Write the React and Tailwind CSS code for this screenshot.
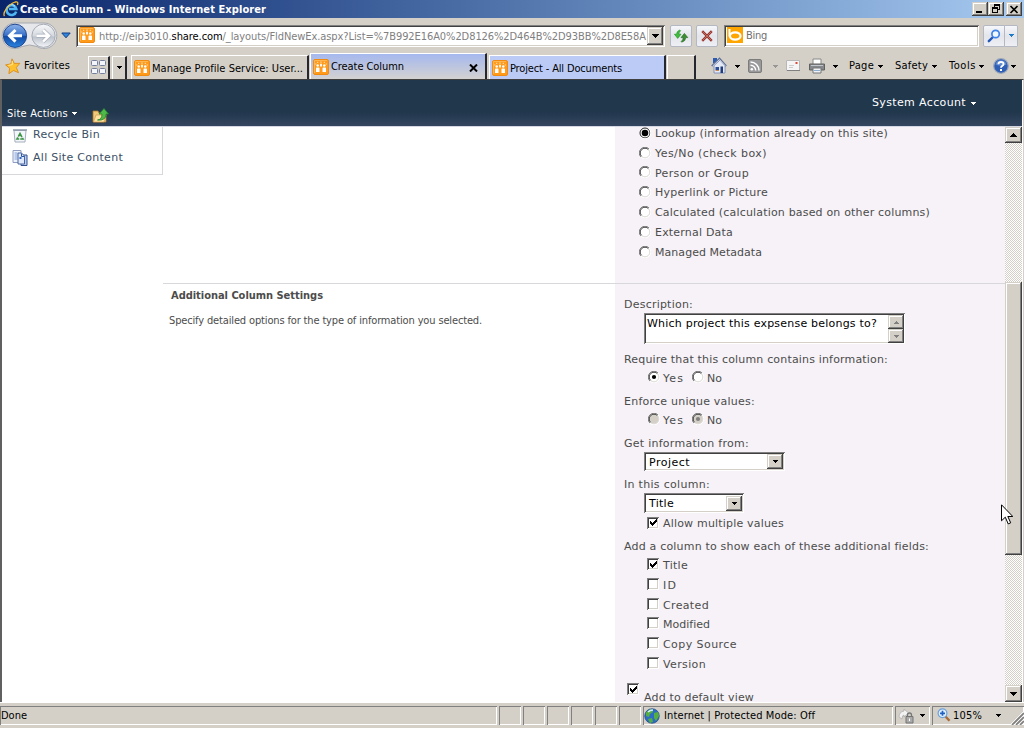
import React, { useLayoutEffect, useRef } from "react";

/* Text run spread over a fixed advance width. */
function T({ w, className = "", children }) {
  const ref = useRef(null);
  useLayoutEffect(() => {
    const el = ref.current;
    el.style.letterSpacing = "0px";
    const natural = el.getBoundingClientRect().width;
    el.style.letterSpacing = (w - natural) / el.textContent.length + "px";
  }, [w]);
  return (
    <span ref={ref} className={"inline-block shrink-0 whitespace-pre " + className}>
      {children}
    </span>
  );
}

const ui = "font-['DejaVu_Sans_Condensed','DejaVu_Sans',sans-serif] [font-stretch:condensed] text-[11px]";
const raised =
  "bg-[#d4d0c8] shadow-[inset_-1px_-1px_#404040,inset_1px_1px_#d4d0c8,inset_-2px_-2px_#808080,inset_2px_2px_#ffffff]";
const sunken =
  "bg-white shadow-[inset_1px_1px_#808080,inset_-1px_-1px_#ffffff,inset_2px_2px_#404040,inset_-2px_-2px_#d4d0c8]";

function Arrow({ up, className = "", fill = "#000" }) {
  return (
    <svg className={"shrink-0 " + className} width="5" height="3" viewBox="0 0 5 3" shapeRendering="crispEdges">
      <path d={up ? "M2 0h1v1h1v1h1v1H0V2h1V1h1z" : "M0 0h5v1H4v1H3v1H2V2H1V1H0z"} fill={fill} />
    </svg>
  );
}

function BigArrow({ up }) {
  return (
    <svg width="7" height="4" viewBox="0 0 7 4" shapeRendering="crispEdges">
      <path d={up ? "M3 0h1v1h1v1h1v1h1v1H0V3h1V2h1V1h1z" : "M0 0h7v1H6v1H5v1H4v1H3V3H2V2H1V1H0z"} fill="#000" />
    </svg>
  );
}

function PeopleIcon({ className = "" }) {
  return (
    <svg className={"shrink-0 " + className} width="16" height="16" viewBox="0 0 16 16">
      <rect x=".5" y=".5" width="15" height="15" rx="1.5" fill="#ff9a1a" stroke="#f08a10" />
      <path d="M1.500 14V1.500H14" fill="none" stroke="#ffb550" />
      <g fill="#fff">
        <circle cx="4.700" cy="6.600" r="1.250" />
        <circle cx="11.300" cy="6.600" r="1.250" />
        <path d="M3 13V9.300q0-.8.800-.8h1.900q.8 0 .8.800V13zM9.500 13V9.300q0-.8.800-.8h1.900q.8 0 .8.800V13z" />
        <path d="M7.500 2.500h1v1.200h-1zM7 4.800h2v2.700H7z" opacity=".9" />
        <path d="M4.200 2.700h1v1.400h-1zM2.300 4.500h1v1h-1zM10.800 2.700h1v1.400h-1zM12.800 4.500h1v1h-1z" opacity=".75" />
      </g>
    </svg>
  );
}

function IELogo() {
  return (
    <svg className="ml-[3px] shrink-0" width="16" height="16" viewBox="0 0 16 16">
      <path d="M13.200 10.600A4.900 4.900 0 1 1 13.300 8H6" fill="none" stroke="#4fb4f2" strokeWidth="2.600" />
      <path d="M4.200 6.800A4.500 4.500 0 0 1 12 5.200" fill="none" stroke="#b7e6ff" strokeWidth="1" />
      <path d="M1.500 15C-.8 12 5.500 3 12.200 1c2.800-.6 3 1 2.200 3" fill="none" stroke="#f5b932" strokeWidth="1.300" />
    </svg>
  );
}

function NavButtons() {
  return (
    <svg className="shrink-0" width="58" height="30" viewBox="0 0 58 30">
      <defs>
        <linearGradient id="nb" x1="0" y1="0" x2="0" y2="1">
          <stop offset="0" stopColor="#8eb4ea" />
          <stop offset=".48" stopColor="#376fc8" />
          <stop offset=".52" stopColor="#1148a4" />
          <stop offset="1" stopColor="#2c86e0" />
        </linearGradient>
        <linearGradient id="nf" x1="0" y1="0" x2="0" y2="1">
          <stop offset="0" stopColor="#f8f9fb" />
          <stop offset=".5" stopColor="#d4d8df" />
          <stop offset=".55" stopColor="#bcc2cc" />
          <stop offset="1" stopColor="#f4f6f9" />
        </linearGradient>
      </defs>
      <path d="M15 2h29a12.800 12.800 0 1 1-7 23.500q-7.500-3-15 0A12.800 12.800 0 1 1 15 2z" fill="#e5e7eb" stroke="#a5a9b0" strokeWidth="1" />
      <circle cx="15" cy="14.800" r="11.600" fill="url(#nb)" stroke="#24488c" />
      <circle cx="43.500" cy="14.800" r="11.600" fill="url(#nf)" stroke="#a6abb4" />
      <path d="M15.500 9 9.500 14.800l6 5.800M10 14.800h12" fill="none" stroke="#fff" strokeWidth="3" />
      <path d="m43 9 6 5.800-6 5.800M48.500 14.800h-12" fill="none" stroke="#a8afba" strokeWidth="4" />
      <path d="m43 9 6 5.800-6 5.800M48.500 14.800h-12" fill="none" stroke="#fff" strokeWidth="2.600" />
    </svg>
  );
}

function TitleBar() {
  const btn = "flex h-[14px] w-4 shrink-0 items-center justify-center " + raised;
  return (
    <div className="flex h-[18px] items-center bg-linear-to-r from-[#0a246a] to-[#a6caf0]">
      <IELogo />
      <T w={246} className={ui + " ml-px pt-[2px] font-bold text-white leading-4"}>Create Column - Windows Internet Explorer</T>
      <div className="ml-auto mr-[2px] flex">
        <div className={btn}>
          <svg width="12" height="10" viewBox="0 0 12 10" shapeRendering="crispEdges"><path d="M2 7h6v2H2z" /></svg>
        </div>
        <div className={btn}>
          <svg width="12" height="10" viewBox="0 0 12 10" shapeRendering="crispEdges">
            <path d="M4 0h6v6H8V5h1V2H5v1H4zM2 3h6v6H2zm1 2v3h4V5z" fillRule="evenodd" />
          </svg>
        </div>
        <div className={btn + " ml-[2px]"}>
          <svg width="10" height="9" viewBox="0 0 10 9"><path d="m1.500 1 7 7m0-7-7 7" stroke="#000" strokeWidth="1.700" /></svg>
        </div>
      </div>
    </div>
  );
}

function AddressRow() {
  const glass =
    "flex h-[22px] shrink-0 items-center justify-center rounded-[2px] border border-[#b4b8c2] bg-linear-to-b from-[#f6f7fa] via-[#e3e5eb] to-[#eef0f5]";
  return (
    <div className="flex h-[35px] items-center bg-[#d4d0c8]">
      <NavButtons />
      <svg className="ml-[3px] shrink-0" width="10" height="7" viewBox="0 0 10 7">
        <path d="M.8 1h8.400L5 5.800z" fill="#2f86dc" stroke="#123f86" />
      </svg>
      <div className={"ml-[5px] flex h-[22px] w-[589px] shrink-0 items-center pr-[2px] pl-[3px] " + sunken}>
        <PeopleIcon className="-mt-px" />
        <T w={547} className={ui + " ml-[4px] pt-[2px] leading-4 text-[#808080]"}>
          http://eip3010.<span className="text-black">share.com</span>/_layouts/FldNewEx.aspx?List=%7B992E16A0%2D8126%2D464B%2D93BB%2D8E58A
        </T>
        <div className={"ml-auto flex h-[18px] w-4 shrink-0 items-center justify-center " + raised}><BigArrow /></div>
      </div>
      <div className={glass + " ml-[5px] w-[22px]"}>
        <svg width="16" height="16" viewBox="0 0 16 16">
          <path d="M6.800 2Q3.600 3.200 3.600 6.200H1.400L4.700 10.400 8 6.200H5.900Q5.900 4 7.600 2.700z" fill="#3fc03a" stroke="#1d8a26" strokeWidth=".6" />
          <path d="M8.700 14.200Q12.600 13.200 12.700 9.600h2.100L11.400 5.400 8 9.600h2.200Q10.200 12.200 8.200 13.400z" fill="#3d8f2f" stroke="#1d6420" strokeWidth=".6" />
        </svg>
      </div>
      <div className={glass + " ml-1 w-[22px]"}>
        <svg width="12" height="12" viewBox="0 0 12 12">
          <path d="m1.200 1.200 9.600 9.600m0-9.600-9.600 9.600" stroke="#93342f" strokeWidth="2.400" />
          <path d="m1.500 1.500 9 9m0-9-9 9" stroke="#c9685c" strokeWidth="1" />
        </svg>
      </div>
      <div className={"ml-[6px] flex h-[22px] w-[255px] shrink-0 items-center pl-[3px] " + sunken}>
        <svg className="-mt-px shrink-0" width="16" height="16" viewBox="0 0 16 16">
          <path d="M0 0h16v16H0z" fill="#ffa500" />
          <path d="M2.500 2v7.500" stroke="#fff" strokeWidth="2" />
          <ellipse cx="8.200" cy="9" rx="5.300" ry="3.600" fill="none" stroke="#fff" strokeWidth="2.200" />
        </svg>
        <T w={21} className={ui + " ml-[3px] pt-[2px] text-[#707070]"}>Bing</T>
      </div>
      <div className={glass + " ml-1 w-[22px] rounded-r-none"}>
        <svg width="14" height="14" viewBox="0 0 14 14">
          <path d="m6 8-4.200 4.200" stroke="#2458b8" strokeWidth="2.400" strokeLinecap="round" />
          <circle cx="8.600" cy="5" r="3.700" fill="#f2f8ff" stroke="#3f82e8" strokeWidth="1.700" />
        </svg>
      </div>
      <div className={glass + " w-[13px] rounded-l-none border-l-0"}><Arrow fill="#1f7bc8" /></div>
    </div>
  );
}

function Star() {
  return (
    <svg className="ml-[5px] shrink-0" width="16" height="16" viewBox="0 0 16 16">
      <path d="M7 .8 9.300 5.400l5.500-.1-3.500 4.200 2.200 5.200-5-2.200-4.600 3.200.7-5.500L.600 6.900l5.300-1z" fill="#ffc02e" stroke="#d98a18" strokeWidth=".9" />
      <path d="m7.200 3 .2 3.600-4 .8" fill="none" stroke="#ffe898" />
    </svg>
  );
}

function HomeIcon() {
  return (
    <svg className="shrink-0" width="16" height="17" viewBox="0 0 16 17">
      <path d="M2 1h4v5H2z" fill="#2c5cae" />
      <path d="M3 8.500 9 3l5 5.500V16H3z" fill="#e3e9f4" stroke="#7a8bb4" strokeWidth=".9" />
      <path d="M.8 9.200 8.500 1.500l6.700 7.700" fill="none" stroke="#5f6f94" strokeWidth="1.800" />
      <path d="M1.500 9.200 8.500 2.500l6 6.700" fill="none" stroke="#dfe8f6" strokeWidth=".8" />
      <path d="M4.500 10h3.500v3H4.500z" fill="#2f4f94" />
      <path d="M9.500 9.500H12V16H9.500z" fill="#1f3b7c" />
      <path d="M4.500 13.500H8" stroke="#c98a50" />
    </svg>
  );
}

function CommandBar() {
  return (
    <>
      <div className="-mt-px ml-[15px] flex w-4 shrink-0"><HomeIcon /></div>
      <Arrow className="ml-2" />
      <svg className="ml-[8px] shrink-0" width="14" height="14" viewBox="0 0 14 14">
        <rect x=".5" y=".5" width="13" height="13" rx="1.500" fill="#9a9a9a" stroke="#7c7c7c" />
        <circle cx="3.800" cy="10.200" r="1.300" fill="#fff" />
        <path d="M2.500 6.300a5.200 5.200 0 0 1 5.200 5.200M2.500 3a8.500 8.500 0 0 1 8.500 8.500" fill="none" stroke="#fff" strokeWidth="1.500" />
      </svg>
      <Arrow className="ml-[11px]" fill="#969696" />
      <svg className="-mt-[2px] ml-2 shrink-0" width="14" height="11" viewBox="0 0 14 11">
        <path d="M.5.500h13v10H.5z" fill="#f5f5f5" stroke="#b8b8b8" />
        <path d="M1 10.500h13" stroke="#808080" />
        <path d="M9.500 2h2v2h-2z" fill="#d94a38" />
        <path d="M3 5.500h5M3 7.500h4" stroke="#ccc" />
      </svg>
      <svg className="ml-[9px] shrink-0" width="16" height="16" viewBox="0 0 16 16">
        <path d="M4 1h8v6H4z" fill="#fff" stroke="#888" />
        <path d="M.500 6h15v6H.500z" fill="#85888c" stroke="#606060" />
        <path d="M2 7.500h12" stroke="#c3c6ca" />
        <path d="M4 10h8v5H4z" fill="#eef2f6" stroke="#777" />
        <path d="M5 12.500h6" stroke="#8fb0d0" />
      </svg>
      <Arrow className="ml-2" />
      <T w={25} className="ml-[11px]">Page</T>
      <Arrow className="ml-[4px]" />
      <T w={33} className="ml-[12px]">Safety</T>
      <Arrow className="ml-[4px]" />
      <T w={27} className="ml-[12px]">Tools</T>
      <Arrow className="ml-[3px]" />
      <svg className="-mt-px ml-[9px] shrink-0" width="16" height="16" viewBox="0 0 16 16">
        <circle cx="8" cy="8" r="7.300" fill="#2e5fb5" stroke="#9ba6ba" strokeWidth="1.200" />
        <path d="M2.500 6.500a5.700 5.700 0 0 1 11 0Q8 9 2.500 6.500z" fill="#7da5e4" opacity=".6" />
        <path d="M5.400 6.300Q5.500 4 8 4t2.600 2.100Q10.600 7.300 9 8.100q-1 .5-1 1.700" fill="none" stroke="#fff" strokeWidth="1.800" />
        <path d="M7 11h2v2H7z" fill="#fff" />
      </svg>
      <Arrow className="ml-[2px]" />
    </>
  );
}

function TabsRow() {
  const edge = "shrink-0 border-t border-l border-t-white border-l-white border-r-2 border-r-[#26262e]";
  return (
    <div className={"flex h-[26px] items-center bg-[#d4d0c8] text-black " + ui}>
      <Star />
      <T w={46} className="ml-[3px]">Favorites</T>
      <div className={"ml-[18px] flex h-[23px] w-[22px] items-center justify-center self-end pb-[2px] " + edge}>
        <svg width="16" height="16" viewBox="0 0 16 16">
          <g fill="#f3f5fa" stroke="#747f9c">
            <rect x=".5" y="1.500" width="6" height="5" rx="1" /><rect x="8.500" y="1.500" width="6" height="5" rx="1" />
            <rect x=".5" y="9.500" width="6" height="5" rx="1" /><rect x="8.500" y="9.500" width="6" height="5" rx="1" />
          </g>
        </svg>
      </div>
      <div className={"ml-[2px] flex h-[23px] w-[15px] items-center justify-center self-end " + edge}><Arrow className="-mt-[2px]" /></div>
      <div className={"ml-[4px] flex h-[24px] w-[178px] items-center self-end pl-[2px] " + edge}>
        <PeopleIcon />
        <T w={151} className="ml-[2px] pt-[3px]">Manage Profile Service: User...</T>
      </div>
      <div className={"ml-[1px] flex h-[26px] w-[177px] items-center self-end bg-linear-to-b from-[#a5b8ee] to-[#d4d2d0] pl-[2px] " + edge}>
        <PeopleIcon />
        <T w={73} className="ml-[2px] pt-[2px]">Create Column</T>
        <svg className="mt-[2px] mr-[7px] ml-auto shrink-0" width="9" height="8" viewBox="0 0 9 8">
          <path d="m1 .500 7 7m0-7-7 7" stroke="#000" strokeWidth="2" />
        </svg>
      </div>
      <div className={"ml-[2px] flex h-[24px] w-[177px] items-center self-end bg-[#bccbf6] pl-[2px] " + edge}>
        <PeopleIcon />
        <T w={112} className="ml-[2px] pt-[3px]">Project - All Documents</T>
      </div>
      <div className={"ml-[1px] h-[24px] w-[29px] self-end " + edge} />
      <CommandBar />
    </div>
  );
}

function SiteHeader() {
  return (
    <div className="flex h-[46px] items-end bg-linear-to-b from-[#21374c] from-70% to-[#34465f] text-white">
      <div className="flex h-[26px] items-center pl-[5px]">
        <T w={61} className={ui + " pt-[2px]"}>Site Actions</T>
        <Arrow className="mt-px ml-[4px]" fill="#fff" />
        <svg className="mt-[4px] ml-[15px]" width="17" height="16" viewBox="0 0 17 16">
          <path d="M1 4h5l1 2h7v9H1z" fill="#f0c878" stroke="#ad7829" strokeWidth=".8" />
          <path d="M1.500 15 4 8h10l-2 7z" fill="#ffe1a0" stroke="#c8944c" strokeWidth=".6" />
          <path d="M5.500 13q4.500-.5 4.500-6H7l5-5.500L16.500 7H14q0 7-8.500 6z" fill="#4fb948" stroke="#238331" strokeWidth=".8" />
        </svg>
      </div>
      <div className="mr-[46px] mb-[15px] ml-auto flex items-center">
        <T w={94} className="font-['DejaVu_Sans',sans-serif] text-[11px] leading-4">System Account</T>
        <Arrow className="ml-[5px]" fill="#fff" />
      </div>
    </div>
  );
}

function Radio({ checked, disabled, className = "" }) {
  return (
    <svg className={"shrink-0 " + className} width="12" height="12" viewBox="0 0 12 12">
      <circle cx="6" cy="6" r="5" fill={disabled ? "#d4d0c8" : "#fff"} />
      <path d="M1.900 10.100A5.700 5.700 0 0 1 10.100 1.900" fill="none" stroke="#808080" />
      <path d="M10.100 1.900A5.700 5.700 0 0 1 1.900 10.100" fill="none" stroke="#fff" />
      <path d="M2.600 9.400A4.700 4.700 0 0 1 9.400 2.600" fill="none" stroke="#404040" />
      <path d="M9.400 2.600A4.700 4.700 0 0 1 2.600 9.400" fill="none" stroke="#dedbd6" />
      {checked && <circle cx="6" cy="6" r="2.100" fill={disabled ? "#808080" : "#000"} />}
    </svg>
  );
}

function FocusedRadio() {
  return (
    <svg className="-mt-px shrink-0" width="12" height="12" viewBox="0 0 12 12">
      <circle cx="6" cy="6" r="5" fill="#fff" stroke="#222" />
      <path d="M10.100 1.900A5.700 5.700 0 0 1 1.900 10.100" fill="none" stroke="#fff" />
      <circle cx="6" cy="6" r="3.300" fill="#000" />
    </svg>
  );
}

function Check({ checked, className = "" }) {
  return (
    <span className={"flex h-3 w-3 shrink-0 items-center justify-center " + sunken + " " + className}>
      {checked && (
        <svg width="7" height="7" viewBox="0 0 7 7" shapeRendering="crispEdges">
          <path d="M0 2h1v1h1v1h1V3h1V2h1V1h1V0h1v3H6v1H5v1H4v1H3v1H2V6H1V5H0z" fill="#000" />
        </svg>
      )}
    </span>
  );
}

function SelectBox({ className = "", children }) {
  return (
    <div className={"ml-[29px] flex items-center pr-[2px] pl-[5px] text-black " + sunken + " " + className}>
      {children}
      <span className={"ml-auto flex h-[15px] w-4 items-center justify-center " + raised}><Arrow /></span>
    </div>
  );
}

const columnTypes = [
  ["Lookup (information already on this site)", 233],
  ["Yes/No (check box)", 112],
  ["Person or Group", 94],
  ["Hyperlink or Picture", 113],
  ["Calculated (calculation based on other columns)", 275],
  ["External Data", 78],
  ["Managed Metadata", 107],
];

const extraFields = [
  ["Title", 25, "h-5"],
  ["ID", 14, "h-5"],
  ["Created", 46, "h-[19px]"],
  ["Modified", 47, "h-5"],
  ["Copy Source", 74, "h-5"],
  ["Version", 43, "h-5"],
];

function YesNo({ disabled }) {
  return (
    <div className="flex h-5 items-center pl-[33px]">
      <Radio checked={!disabled} disabled={disabled} className="-mt-[2px]" />
      <T w={21} className="ml-[3px] pt-[2px]">Yes</T>
      <Radio checked={disabled} disabled={disabled} className="-mt-[2px] ml-[8px]" />
      <T w={15} className="ml-[3px] pt-[2px]">No</T>
    </div>
  );
}

function SettingsForm() {
  const label = "flex h-[18px] items-center pt-[2px] pl-[9px]";
  return (
    <div className="flex flex-col pt-[11px] leading-4">
      <div className={label}><T w={69}>Description:</T></div>
      <div className={"ml-[29px] flex h-[31px] w-[261px] justify-between pr-px pl-[3px] text-black " + sunken}>
        <T w={230} className="mt-[3px]">Which project this expsense belongs to?</T>
        <div className="mt-[2px] flex flex-col">
          <span className={"flex h-[14px] w-4 items-center justify-center " + raised}><Arrow up fill="#808080" /></span>
          <span className={"flex h-[14px] w-4 items-center justify-center " + raised}><Arrow fill="#808080" /></span>
        </div>
      </div>
      <div className={label + " mt-[6px]"}><T w={264}>Require that this column contains information:</T></div>
      <YesNo />
      <div className={label + " mt-1"}><T w={131}>Enforce unique values:</T></div>
      <YesNo disabled />
      <div className={label + " mt-1"}><T w={125}>Get information from:</T></div>
      <SelectBox className="h-[19px] w-[141px]"><T w={41} className="pt-[2px]">Project</T></SelectBox>
      <div className={label + " mt-1"}><T w={86}>In this column:</T></div>
      <SelectBox className="h-5 w-[100px]"><T w={25} className="pt-[2px]">Title</T></SelectBox>
      <div className="flex h-5 items-center pl-[32px]">
        <Check checked className="-mt-px" />
        <T w={121} className="ml-1 pt-[2px]">Allow multiple values</T>
      </div>
      <div className={label + " mt-1"}><T w={305}>Add a column to show each of these additional fields:</T></div>
      {extraFields.map(([name, w, h], i) => (
        <div key={name} className={"flex items-center pl-[32px] " + h}>
          <Check checked={i === 0} className="-mt-[2px]" />
          <T w={w} className="ml-1 pt-[2px]">{name}</T>
        </div>
      ))}
      <div className="mt-[9px] flex pl-[12px]">
        <Check checked />
        <T w={110} className="mt-[7px] ml-[5px]">Add to default view</T>
      </div>
    </div>
  );
}

function SideNav() {
  return (
    <div className="flex h-[48px] w-[161px] shrink-0 flex-col border-r border-b border-[#d8d8dc] pl-[10px] text-[#3b4f65]">
      <div className="-mt-[3px] flex h-[22px] items-center">
        <svg width="16" height="16" viewBox="0 0 16 16">
          <path d="M2 3.500h12L13 15H3z" fill="#f3f6fa" stroke="#a4aebc" />
          <path d="M1 3h14" stroke="#8c98a8" strokeWidth="1.500" />
          <path d="m8 6.500 3 5.500H5z" fill="none" stroke="#3d9444" strokeWidth="1.600" strokeDasharray="4 1" />
        </svg>
        <T w={67} className="ml-[5px] pt-px">Recycle Bin</T>
      </div>
      <div className="flex h-[24px] items-center">
        <svg width="16" height="16" viewBox="0 0 16 16">
          <path d="M1 .500h8v12H1z" fill="#eef3fb" stroke="#8f9fc0" />
          <path d="M2.500 3h3M2.500 5h3M2.500 7h3M2.500 9h3" stroke="#7fa3da" />
          <path d="M9 5h6v10.500H9z" fill="#b9cdef" stroke="#35508c" />
          <path d="M6 3h3.500l3 3v8H6z" fill="#dfe9fa" stroke="#4a64a0" />
          <path d="M9.500 3.500v3H12" fill="none" stroke="#2757a8" />
          <path d="M7.500 7h2v2h-2z" fill="#2f66c0" />
        </svg>
        <T w={90} className="ml-[5px] pt-px">All Site Content</T>
      </div>
    </div>
  );
}

function ScrollBar() {
  return (
    <div className="flex w-[17px] shrink-0 flex-col bg-[repeating-conic-gradient(#ffffff_0_25%,#d4d0c8_0_50%)] bg-[length:2px_2px]">
      <div className={"flex h-[16px] items-center justify-center " + raised}><BigArrow up /></div>
      <div className={"mt-[139px] h-[273px] " + raised} />
      <div className={"mt-auto flex h-[17px] items-center justify-center " + raised}><BigArrow /></div>
    </div>
  );
}

function Page() {
  return (
    <div className="flex h-[576px] overflow-hidden border-t border-[#d5d8e2] bg-white font-['DejaVu_Sans',sans-serif] text-[11px] text-[#4c4c4c]">
      <SideNav />
      <div className="flex min-w-0 grow flex-col">
        <div className="flex h-[157px] shrink-0 border-b border-[#d8d8dc]">
          <div className="w-[452px]" />
          <div className="-mt-[3.600px] grow bg-[#f6f2f7] pl-[24px]">
            {columnTypes.map(([name, w], i) => (
              <div key={name} className="flex h-[19.800px] items-center">
                {i === 0 ? <FocusedRadio /> : <Radio className="-mt-px" />}
                <T w={w} className="ml-[4px] pt-[2px]">{name}</T>
              </div>
            ))}
          </div>
        </div>
        <div className="flex grow">
          <div className={"w-[452px] pt-[3px] " + ui}>
            <div className="pl-[8px] leading-[18px]"><T w={152} className="font-bold">Additional Column Settings</T></div>
            <div className="mt-[7px] pl-[6px] leading-[18px]"><T w={313}>Specify detailed options for the type of information you selected.</T></div>
          </div>
          <div className="grow bg-[#f6f2f7]"><SettingsForm /></div>
        </div>
      </div>
      <ScrollBar />
    </div>
  );
}

function StatusBar() {
  const pane = "flex h-[19px] shrink-0 items-center shadow-[inset_1px_1px_#808080,inset_-1px_-1px_#ffffff]";
  return (
    <div className={"flex h-[26px] border-t-[1px] border-b-[3px] border-t-white border-b-[#d4d0c8] bg-[#d4d0c8] pt-[3px] text-black " + ui}>
      <div className={pane + " w-[497px] pl-px"}><T w={26} className="pt-[2px]">Done</T></div>
      {[0, 1, 2, 3, 4, 5].map((i) => <div key={i} className={pane + " w-[22px] ml-[2px]"} />)}
      <div className={pane + " ml-[2px] w-[250px] pl-px"}>
        <svg width="16" height="16" viewBox="0 0 16 16">
          <circle cx="8" cy="8" r="7.300" fill="#2d6cc4" stroke="#244b80" strokeWidth=".7" />
          <path d="M2 4.500Q5 1 8 1l1 3-3 2-1 3-3-1zM10 5l4-1 1 4-3 5-2-3zM4 11l4-1 1 4-3 1z" fill="#55ae42" />
          <path d="M4 4q2-2 5-2" fill="none" stroke="#d4f0fa" strokeWidth="1.500" />
        </svg>
        <T w={151} className="ml-[4px] pt-[2px]">Internet | Protected Mode: Off</T>
      </div>
      <div className={pane + " ml-[2px] w-[35px] pl-[3px]"}>
        <svg width="16" height="16" viewBox="0 0 16 16">
          <path d="M1 9q0-5 5-6V1l4.500 4L6 9V7Q4 7 4 11z" fill="#f3f3f3" stroke="#aaa" strokeWidth=".7" />
          <path d="M9.500 9V7a2 2 0 0 1 4 0v2" fill="none" stroke="#777" strokeWidth="1.300" />
          <path d="M8 8.500h7V15H8z" fill="#aaa" stroke="#747474" />
          <path d="M11 10.500h1v2.500h-1z" fill="#fff" />
        </svg>
        <Arrow className="ml-[6px]" />
      </div>
      <div className={pane + " ml-[2px] w-[92px] pl-[5px]"}>
        <svg className="-mt-px shrink-0" width="14" height="14" viewBox="0 0 14 14">
          <path d="m8 8 4.500 4.800" stroke="#a96c38" strokeWidth="2.400" />
          <circle cx="5.500" cy="5.300" r="4.400" fill="#e1f0ff" stroke="#6c9fd8" strokeWidth="1.200" />
          <path d="M5.500 2.800v5M3 5.300h5" stroke="#205fc2" strokeWidth="1.700" />
        </svg>
        <T w={29} className="ml-[2px] pt-[2px]">105%</T>
        <Arrow className="ml-[14px]" />
        <svg className="mt-[6px] ml-auto" width="13" height="13" viewBox="0 0 13 13">
          <path d="M1 13 13 1M5 13l8-8M9 13l4-4" stroke="#808080" strokeWidth="1.600" />
          <path d="M0 12 12 0M4 12l9-9M8 12l5-5" stroke="#fff" strokeWidth=".8" />
        </svg>
      </div>
    </div>
  );
}

export default function App() {
  return (
    <div className="relative h-[732px] w-[1032px] overflow-hidden bg-white">
      <div className="flex w-[1024px] flex-col">
        <TitleBar />
        <AddressRow />
        <TabsRow />
        <div className="flex flex-col border-t border-r border-l-2 border-t-[#404040] border-r-[#d4d0c8] border-l-[#606060] pr-px">
          <SiteHeader />
          <Page />
        </div>
        <StatusBar />
      </div>
      <svg className="absolute top-[504px] left-[1001px]" width="12" height="21" viewBox="0 0 12 21">
        <path d="M.5.800v16l3.800-3.600 2.900 6.700 2.500-1.100-2.900-6.300h5z" fill="#fff" stroke="#000" />
      </svg>
    </div>
  );
}
